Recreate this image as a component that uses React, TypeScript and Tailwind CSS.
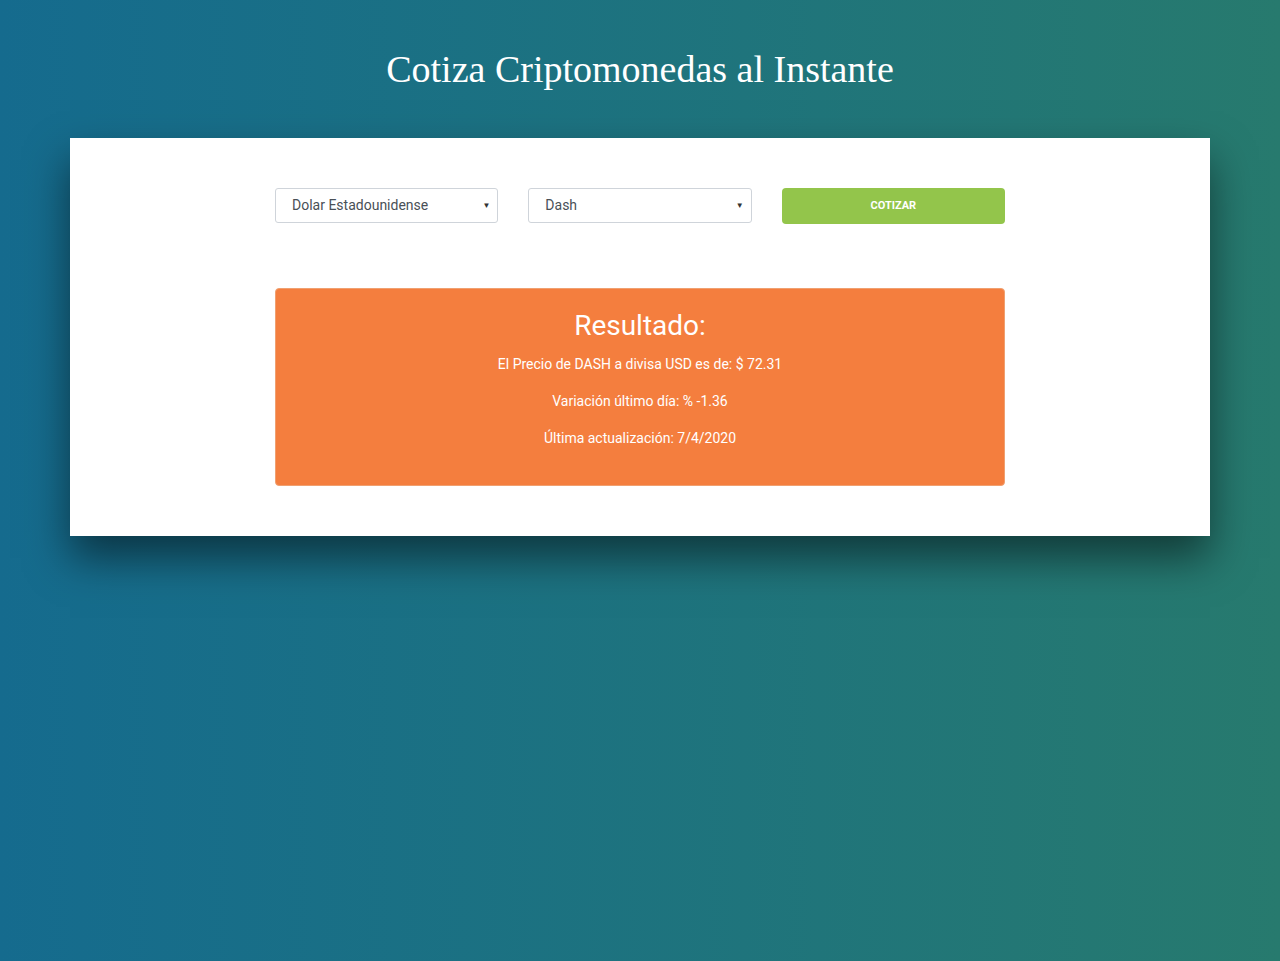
export default function App() {
  return (
    <div
      className="min-h-[961px] w-full bg-gradient-to-r from-[#156b8e] to-[#277a6e] pt-[45px]"
      style={{ fontFamily: 'Roboto, "Liberation Sans", sans-serif' }}
    >
      <h1 className="text-center text-[38px] leading-[48px] text-white font-['Liberation_Serif',serif]">
        Cotiza Criptomonedas al Instante
      </h1>
      <div className="mx-[70px] mt-[45px] bg-white px-[205px] pt-[50px] pb-[50px] shadow-[0_22px_40px_rgba(0,0,0,0.5)]">
        <div className="grid grid-cols-3 gap-[30px]">
          <Select value="Dolar Estadounidense" />
          <Select value="Dash" />
          <button className="h-[36px] rounded-[4px] bg-[#93c54b] text-[11px] font-bold uppercase text-white">
            Cotizar
          </button>
        </div>
        <div className="mt-[64px] h-[198px] rounded-[4px] border border-[#f0a070] bg-[#f47e3e] pt-[18px] text-center text-white">
          <h2 className="text-[28px] leading-[38px]">Resultado:</h2>
          <p className="mt-[9px] text-[14px] leading-[20px]">El Precio de DASH a divisa USD es de: $ 72.31</p>
          <p className="mt-[17px] text-[14px] leading-[20px]">Variación último día: % -1.36</p>
          <p className="mt-[17px] text-[14px] leading-[20px]">Última actualización: 7/4/2020</p>
        </div>
      </div>
    </div>
  );
}

function Select({ value }: { value: string }) {
  return (
    <div className="flex h-[35px] items-center justify-between rounded-[3px] border border-[#cfd4da] bg-white pl-[16px] pr-[7px] text-[14px] text-[#495057]">
      <span>{value}</span>
      <span className="text-[8px] text-[#333]">▼</span>
    </div>
  );
}
